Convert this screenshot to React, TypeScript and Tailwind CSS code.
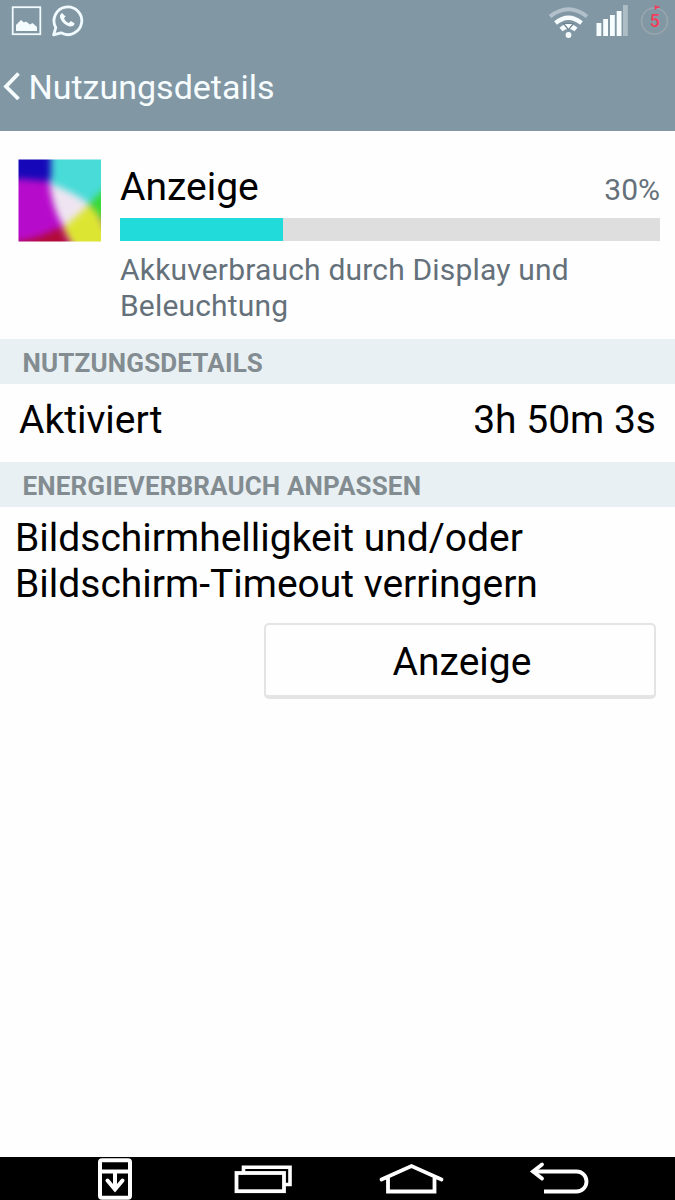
import React from "react";

function SectionHeader({ title }: { title: string }) {
  return (
    <h2 className="h-[45px] shrink-0 bg-[#e8f0f3] pl-[22.5px] text-[26px] leading-[48px] font-bold tracking-[0.15px] text-[#838c90]">
      {title}
    </h2>
  );
}

function StatusBar() {
  return (
    <div className="flex h-[42px] items-start">
      <svg width="90" height="42" viewBox="0 0 90 42" fill="none">
        <rect x="12.7" y="7.2" width="27.6" height="27" stroke="#f0faff" strokeWidth="1.8" />
        <path d="M16 31V25l5-5 3 2.500 2-1 4 3 2.500-1.500L37 27v4z" fill="#f4fcff" />
        <path
          d="M53.600 34.800l2.200-7.200a13.900 13.900 0 1 1 5.200 5.200z"
          stroke="#f0faff"
          strokeWidth="2.800"
          strokeLinejoin="round"
        />
        <path
          d="M62 13c-1.800 1-2.500 3-1.700 5.200 1.700 4.300 5 7.200 9.400 8.200 2.200.4 4.600-.7 5-2.900l-3.800-2.400-2.100 1.900c-2.300-.9-3.900-2.500-4.800-4.800l1.600-1.700z"
          fill="#f4fcff"
        />
      </svg>
      <svg className="ml-auto" width="127" height="42" viewBox="548 0 127 42" fill="none">
        <path d="M550 16.500q18.500-14.500 37 0" stroke="#b1c0ca" strokeWidth="4" />
        <path d="M555.500 23q13-10.500 26 0" stroke="#f7fdff" strokeWidth="4.200" />
        <path d="M561 29.500q7.500-6.500 15 0" stroke="#f7fdff" strokeWidth="4.600" />
        <path d="M563.500 23.500h10l-5 6.200z" fill="#f7fdff" stroke="#6f8591" strokeWidth="1.200" />
        <circle cx="568.500" cy="35" r="2.900" fill="#f7fdff" />
        <path d="M596.500 23h4.800v13h-4.800zM603.200 19h4.800v17h-4.800zM610 15h4.800v21H610zM616.700 11h4.800v25h-4.800z" fill="#f7fdff" />
        <path d="M623 5h4.800v31H623z" fill="#adbcc5" />
        <circle cx="654.500" cy="21" r="13" stroke="#9aa6ad" strokeWidth="1.600" />
        <path d="M655.500 5.500v4M656 7.200h3.500" stroke="#f23d5a" strokeWidth="1.800" />
        <text x="654.700" y="26.500" textAnchor="middle" fontSize="17.500" fontWeight="500" fontFamily="Roboto, sans-serif" fill="#f23d5a">
          5
        </text>
      </svg>
    </div>
  );
}

function DisplayIcon() {
  return (
    <svg className="mt-[14px] h-[83px] w-[83px] shrink-0" viewBox="0 0 83 83">
      <defs>
        <filter id="soft" filterUnits="userSpaceOnUse" x="-30" y="-30" width="143" height="143" colorInterpolationFilters="sRGB">
          <feGaussianBlur stdDeviation="3.500" />
        </filter>
        <clipPath id="frame">
          <rect x="0.500" y="0.500" width="82.500" height="82" />
        </clipPath>
      </defs>
      <g clipPath="url(#frame)">
        <g filter="url(#soft)">
          <rect x="-30" y="-30" width="143" height="143" fill="#b70bcb" />
          <path d="M-30-30H34V24Q20 19-30 20z" fill="#1608b8" />
          <path d="M31 20L56 28 73 44L47 70Q34 51 31 20z" fill="#eee5f1" />
          <path d="M33-30H113V10L73 46Q54 32 33 25z" fill="#48dbd8" />
          <path d="M113 4L71 45L113 92z" fill="#36d936" />
          <path d="M71 46Q80 52 88 70L113 113H68L45 69z" fill="#dce632" />
          <path d="M-30 90L20 78 43 68L62 113H-30z" fill="#b20b39" />
        </g>
      </g>
    </svg>
  );
}

function NavBar() {
  return (
    <nav className="h-[43px] bg-black">
      <svg width="675" height="43" viewBox="0 1157 675 43" fill="none" stroke="#fff" strokeWidth="4">
        <rect x="100" y="1160.300" width="30" height="37.500" rx="2" />
        <path d="M100 1171.500h30M115 1172v17" />
        <path d="M107.500 1180.500l7.500 9 7.500-9" strokeLinecap="round" />
        <path d="M243.500 1172v-4.700h46.500v17.200h-6" strokeWidth="3.600" />
        <rect x="236.500" y="1173" width="47.500" height="18.200" strokeWidth="3.800" />
        <path d="M381.500 1179.500l30-13.500 30 13.500M388 1178v13.500h46.500V1178" strokeLinecap="round" strokeWidth="3.800" />
        <path d="M542 1164.500l-9 7 9 7" strokeLinecap="round" strokeWidth="3.800" />
        <path d="M533 1171.500h43.500a10 10 0 0 1 0 20H544" strokeWidth="3.800" />
      </svg>
    </nav>
  );
}

export default function App() {
  return (
    <div className="flex h-[1200px] w-[675px] flex-col overflow-hidden bg-[#fefefe] font-['Roboto',sans-serif] text-black">
      <header className="h-[131px] shrink-0 bg-[#8197a4]">
        <StatusBar />
        <div className="flex h-[89px] items-start pl-[3px]">
          <svg className="mt-[30px]" width="18" height="30" viewBox="0 0 18 30" fill="none">
            <path d="M15.500 1.500L3 14.500l12.500 12.500" stroke="#f7fdff" strokeWidth="3.800" />
          </svg>
          <h1 className="ml-[7.5px] text-[34px] leading-[91px] text-[#f7fdff]">Nutzungsdetails</h1>
        </div>
      </header>

      <section className="flex h-[208px] shrink-0 gap-[19px] pt-[14px] pr-[15px] pl-[18px]">
        <DisplayIcon />
        <div className="flex-1">
          <div className="flex h-[73px] items-baseline justify-between">
            <span className="text-[39px] leading-[85px]">Anzeige</span>
            <span className="text-[30px] text-[#65717a]">30%</span>
          </div>
          <div className="h-[23px] bg-[#dedede]">
            <div className="h-full w-[30.1%] bg-[#21dada]" />
          </div>
          <p className="mt-[11px] text-[30px] leading-[36px] tracking-[0.18px] text-[#65717a]">
            Akkuverbrauch durch Display und
            <br />
            Beleuchtung
          </p>
        </div>
      </section>

      <SectionHeader title="NUTZUNGSDETAILS" />
      <div className="flex h-[78px] shrink-0 justify-between pr-[19px] pl-[19px] text-[39px] leading-[72px]">
        <span>Aktiviert</span>
        <span>3h 50m 3s</span>
      </div>

      <SectionHeader title="ENERGIEVERBRAUCH ANPASSEN" />
      <main className="flex flex-1 flex-col pt-[8px] pr-[19px] pl-[15px]">
        <p className="text-[39px] leading-[46px]">
          Bildschirmhelligkeit und/oder
          <br />
          Bildschirm-Timeout verringern
        </p>
        <button className="mt-[16px] h-[76px] w-[392px] self-end rounded-[5px] border-2 border-b-4 border-[#e4e4e4] bg-[#fefefe] pt-[4px] pl-[4px] text-[39px]">
          Anzeige
        </button>
      </main>

      <NavBar />
    </div>
  );
}
